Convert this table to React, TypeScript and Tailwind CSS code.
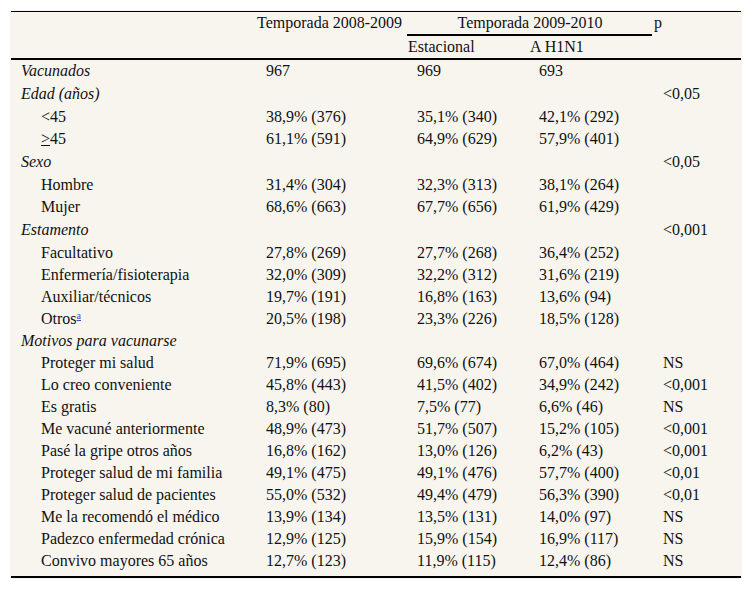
import React from 'react';

// Rows of the vaccination table
type Row =
  | { kind: 'section'; label: string; p?: string; tall?: boolean; vals?: string[] }
  | { kind: 'item'; label: React.ReactNode; vals: string[]; p?: string };

const rows: Row[] = [
  { kind: 'section', label: 'Vacunados', vals: ['967', '969', '693'] },
  { kind: 'section', label: 'Edad (años)', p: '<0,05', tall: true },
  { kind: 'item', label: '<45', vals: ['38,9% (376)', '35,1% (340)', '42,1% (292)'] },
  {
    kind: 'item',
    label: (
      <>
        <span className="underline">&gt;</span>45
      </>
    ),
    vals: ['61,1% (591)', '64,9% (629)', '57,9% (401)'],
  },
  { kind: 'section', label: 'Sexo', p: '<0,05', tall: true },
  { kind: 'item', label: 'Hombre', vals: ['31,4% (304)', '32,3% (313)', '38,1% (264)'] },
  { kind: 'item', label: 'Mujer', vals: ['68,6% (663)', '67,7% (656)', '61,9% (429)'] },
  { kind: 'section', label: 'Estamento', p: '<0,001', tall: true },
  { kind: 'item', label: 'Facultativo', vals: ['27,8% (269)', '27,7% (268)', '36,4% (252)'] },
  { kind: 'item', label: 'Enfermería/fisioterapia', vals: ['32,0% (309)', '32,2% (312)', '31,6% (219)'] },
  { kind: 'item', label: 'Auxiliar/técnicos', vals: ['19,7% (191)', '16,8% (163)', '13,6% (94)'] },
  {
    kind: 'item',
    label: (
      <>
        Otros
        <sup className="text-[10px] text-[#2a4fd8] underline">a</sup>
      </>
    ),
    vals: ['20,5% (198)', '23,3% (226)', '18,5% (128)'],
  },
  { kind: 'section', label: 'Motivos para vacunarse' },
  { kind: 'item', label: 'Proteger mi salud', vals: ['71,9% (695)', '69,6% (674)', '67,0% (464)'], p: 'NS' },
  { kind: 'item', label: 'Lo creo conveniente', vals: ['45,8% (443)', '41,5% (402)', '34,9% (242)'], p: '<0,001' },
  { kind: 'item', label: 'Es gratis', vals: ['8,3% (80)', '7,5% (77)', '6,6% (46)'], p: 'NS' },
  { kind: 'item', label: 'Me vacuné anteriormente', vals: ['48,9% (473)', '51,7% (507)', '15,2% (105)'], p: '<0,001' },
  { kind: 'item', label: 'Pasé la gripe otros años', vals: ['16,8% (162)', '13,0% (126)', '6,2% (43)'], p: '<0,001' },
  { kind: 'item', label: 'Proteger salud de mi familia', vals: ['49,1% (475)', '49,1% (476)', '57,7% (400)'], p: '<0,01' },
  { kind: 'item', label: 'Proteger salud de pacientes', vals: ['55,0% (532)', '49,4% (479)', '56,3% (390)'], p: '<0,01' },
  { kind: 'item', label: 'Me la recomendó el médico', vals: ['13,9% (134)', '13,5% (131)', '14,0% (97)'], p: 'NS' },
  { kind: 'item', label: 'Padezco enfermedad crónica', vals: ['12,9% (125)', '15,9% (154)', '16,9% (117)'], p: 'NS' },
  { kind: 'item', label: 'Convivo mayores 65 años', vals: ['12,7% (123)', '11,9% (115)', '12,4% (86)'], p: 'NS' },
];

const cols = 'grid grid-cols-[246px_151px_123px_123px_88px]';

export default function App() {
  return (
    <div className="min-h-screen bg-white p-[10px] font-['Liberation_Serif','Times_New_Roman',serif] text-[16px] leading-[22px] text-[#111]">
      <div className="w-[732px] bg-[#f8f5ef] px-px pt-px pb-px">
        <div className="border-t border-black">
          {/* Header row 1 */}
          <div className={`${cols} h-[22px] items-center`}>
            <div />
            <div>Temporada 2008-2009</div>
            <div className="col-span-2 pr-[2px]">
              <div className="text-center">Temporada 2009-2010</div>
            </div>
            <div>p</div>
          </div>
          {/* Header row 2 */}
          <div className={`${cols} h-[26px] border-b-2 border-black`}>
            <div />
            <div />
            <div className="col-span-2 mr-[2px] -ml-px border-t-2 border-black">
              <div className="flex h-[22px] items-center">
                <span className="w-[123px] pl-px">Estacional</span>
                <span>A H1N1</span>
              </div>
            </div>
            <div />
          </div>

          {/* Body rows */}
          {rows.map((r, i) => (
            <div key={i} className={`${cols} items-center ${r.kind === 'section' && r.tall ? 'h-[24px]' : 'h-[22px]'}`}>
              {r.kind === 'section' ? (
                <div className="pl-[10px] italic">{r.label}</div>
              ) : (
                <div className="pl-[30px]">{r.label}</div>
              )}
              <div className="pl-[9px]">{r.vals?.[0]}</div>
              <div className="pl-[9px]">{r.vals?.[1]}</div>
              <div className="pl-[8px]">{r.vals?.[2]}</div>
              <div className="pl-[9px]">{r.p}</div>
            </div>
          ))}
          <div className="h-[6px] border-b-2 border-black" />
        </div>
      </div>
    </div>
  );
}
